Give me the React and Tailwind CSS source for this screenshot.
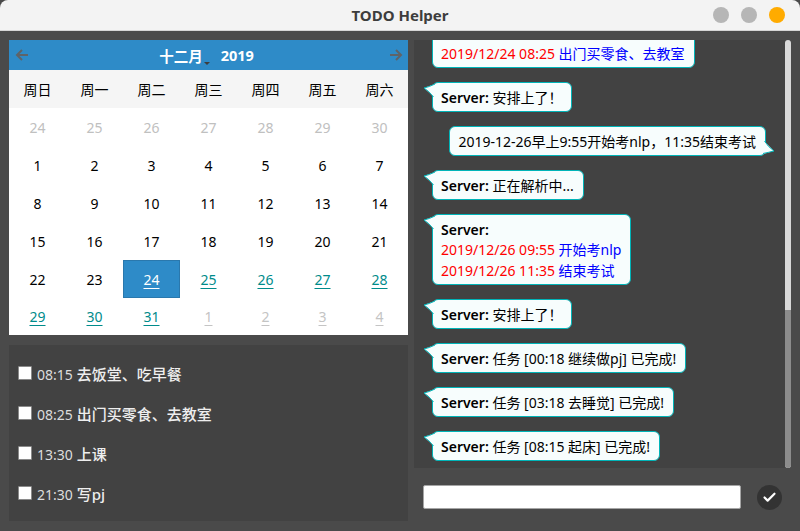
import { Check } from 'lucide-react'

const weekDays = ['周日', '周一', '周二', '周三', '周四', '周五', '周六']

const days = [
  [24, 25, 26, 27, 28, 29, 30],
  [1, 2, 3, 4, 5, 6, 7],
  [8, 9, 10, 11, 12, 13, 14],
  [15, 16, 17, 18, 19, 20, 21],
  [22, 23, 24, 25, 26, 27, 28],
  [29, 30, 31, 1, 2, 3, 4],
]

const todos = [
  { time: '08:15', text: '去饭堂、吃早餐' },
  { time: '08:25', text: '出门买零食、去教室' },
  { time: '13:30', text: '上课' },
  { time: '21:30', text: '写pj' },
]

const dayClass = (row, col) => {
  if (row === 0) return 'text-[#c0c0c0]'
  if (row === 4 && col === 2) return 'bg-[#2e8bc8] border border-[#2a78ad] text-white underline underline-offset-[3px]'
  if (row === 4 && col > 2) return 'text-[#008b8b] underline underline-offset-[3px]'
  if (row === 5 && col < 3) return 'text-[#008b8b] underline underline-offset-[3px]'
  if (row === 5) return 'text-[#c4c4c4] underline underline-offset-[3px]'
  return 'text-black'
}

const Bubble = ({ right, children }) => (
  <div className={`relative w-fit shrink-0 rounded-md border border-[#00b4b8] bg-[#f7fdfd] pb-[3px] pl-2 pr-[9px] pt-[5px] text-[14px] leading-[20.5px] text-black ${right ? 'mr-[25px] self-end' : 'ml-[18px]'}`}>
    {right ? (
      <svg className="absolute -right-[10px] -bottom-px" width="12" height="18" viewBox="0 0 12 18">
        <path d="M1 3 L11 13 L0 16 Z" fill="#f7fdfd" />
        <path d="M1.5 3 Q5 9 11 13 Q5 14.5 0 15.5" fill="none" stroke="#00b4b8" />
      </svg>
    ) : (
      <svg className="absolute -left-[10px] -top-px" width="12" height="18" viewBox="0 0 12 18">
        <path d="M12 2 L1 6 L11 15 Z" fill="#f7fdfd" />
        <path d="M12 2 Q6 5 1 6 Q6 9 10.5 15" fill="none" stroke="#00b4b8" />
      </svg>
    )}
    {children}
  </div>
)

const Server = () => <b className="font-semibold">Server: </b>

const Task = ({ when, what }) => (
  <div>
    <span className="text-[#ff0000]">{when}</span> <span className="text-[#0000ff]">{what}</span>
  </div>
)

export default function App() {
  return (
    <div className="flex h-[531px] w-[800px] flex-col overflow-hidden bg-[#4a4a4a] font-['Noto_Sans','Noto_Sans_CJK_SC',sans-serif]">
      {/* Title bar */}
      <div className="relative flex h-[31px] shrink-0 items-center justify-center rounded-t-lg border-b border-[#d5d5d5] bg-[#f3f3f3]">
        <span className="text-[15px] font-bold text-[#3d3d3d]">TODO Helper</span>
        <div className="absolute right-[15px] top-[7px] flex gap-[12px]">
          <span className="h-4 w-4 rounded-full bg-[#b6b6b6]" />
          <span className="h-4 w-4 rounded-full bg-[#b6b6b6]" />
          <span className="h-4 w-4 rounded-full bg-[#ffab00]" />
        </div>
      </div>

      <div className="flex min-h-0 flex-1 pt-[9px]">
        {/* Left column */}
        <div className="ml-[9px] flex w-[399px] shrink-0 flex-col">
          <div className="bg-white">
            <div className="flex h-[30px] items-center justify-between bg-[#2e8bc8] pl-[6px] pr-[5px]">
              <svg width="14" height="14" viewBox="0 0 14 14" fill="none" stroke="#5f6368" strokeWidth="2">
                <path d="M13 7 H2 M7 2 L2 7 L7 12" />
              </svg>
              <div className="flex items-center pr-[5px] text-white">
                <span className="relative text-[14.5px] font-bold leading-[20px] translate-y-px">
                  十二月
                  <span className="absolute -right-[7px] bottom-[1px] h-0 w-0 border-x-[3px] border-t-[3px] border-x-transparent border-t-[#3d3d3d]" />
                </span>
                <span className="ml-[18px] text-[14.5px] font-bold leading-[20px]">2019</span>
              </div>
              <svg width="14" height="14" viewBox="0 0 14 14" fill="none" stroke="#5f6368" strokeWidth="2">
                <path d="M1 7 H12 M7 2 L12 7 L7 12" />
              </svg>
            </div>
            <div className="grid h-[38px] grid-cols-7 items-center bg-[#f5f5f5] text-center text-[14px] text-black">
              {weekDays.map((d) => (
                <span key={d}>{d}</span>
              ))}
            </div>
            <div className="grid grid-cols-7 text-[14px]">
              {days.flatMap((week, row) =>
                week.map((d, col) => (
                  <div key={`${row}-${col}`} className={`flex items-center justify-center ${row === 5 ? 'h-[37px]' : 'h-[38px]'} ${dayClass(row, col)}`}>
                    {d}
                  </div>
                ))
              )}
            </div>
          </div>

          <div className="mt-[10px] flex h-[176px] flex-col gap-[19px] bg-[#424242] pl-[9px] pt-[19px] text-[14px] text-[#eeeeee]">
            {todos.map((t) => (
              <label key={t.time} className="flex h-[21px] items-center">
                <span className="mb-[3px] mr-[5px] h-[14px] w-[14px] rounded-[1px] border border-[#8a8a8a] bg-white" />
                <span className="text-[#dddddd]">{t.time}</span>
                <span className="ml-[4px] text-[15px] font-medium">{t.text}</span>
              </label>
            ))}
          </div>
        </div>

        {/* Right column */}
        <div className="ml-[6px] flex min-w-0 flex-1 flex-col">
          <div className="relative mr-[9px] flex h-[428px] flex-col justify-end gap-[13.5px] overflow-hidden bg-[#424242] pb-[7px]">
            <Bubble>
              <Server />
              <Task when="2019/12/24 08:15" what="起床" />
              <Task when="2019/12/24 08:25" what="出门买零食、去教室" />
            </Bubble>
            <Bubble><Server />安排上了！</Bubble>
            <Bubble right>2019-12-26早上9:55开始考nlp，11:35结束考试</Bubble>
            <Bubble><Server />正在解析中...</Bubble>
            <Bubble>
              <Server />
              <Task when="2019/12/26 09:55" what="开始考nlp" />
              <Task when="2019/12/26 11:35" what="结束考试" />
            </Bubble>
            <Bubble><Server />安排上了！</Bubble>
            <Bubble><Server />任务 [00:18 继续做pj] 已完成!</Bubble>
            <Bubble><Server />任务 [03:18 去睡觉] 已完成!</Bubble>
            <Bubble><Server />任务 [08:15 起床] 已完成!</Bubble>
            {/* scrollbar */}
            <div className="absolute bottom-0 right-0 top-0 w-[6px] overflow-hidden rounded-full bg-[#d8d8d8]">
              <div className="mt-[270px] h-[158px] bg-[#8c8c8c]" />
            </div>
          </div>
          <div className="flex flex-1 items-start pl-[9px] pt-[17px]">
            <input className="h-[24px] w-[318px] rounded-[2px] border border-[#a5a5a5] bg-white" />
            <button className="ml-[16px] flex h-[25px] w-[25px] items-center justify-center rounded-full bg-[#333333]">
              <Check size={15} strokeWidth={3.5} className="text-white" />
            </button>
          </div>
        </div>
      </div>
    </div>
  )
}
